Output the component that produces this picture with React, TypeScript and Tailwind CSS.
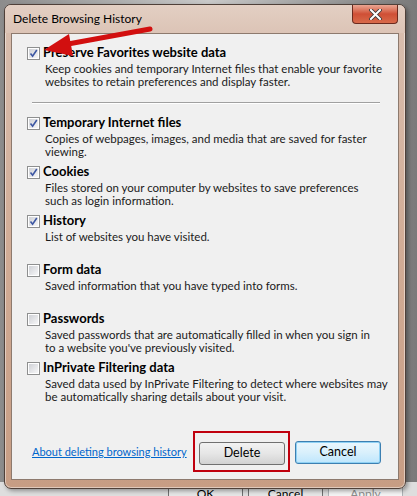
import React from "react";

type Entry = {
  label: string;
  lines: string[];
  checked: boolean;
};

const entries: Entry[] = [
  {
    label: "Temporary Internet files",
    lines: ["Copies of webpages, images, and media that are saved for faster", "viewing."],
    checked: true,
  },
  {
    label: "Cookies",
    lines: ["Files stored on your computer by websites to save preferences", "such as login information."],
    checked: true,
  },
  { label: "History", lines: ["List of websites you have visited."], checked: true },
  { label: "Form data", lines: ["Saved information that you have typed into forms."], checked: false },
  {
    label: "Passwords",
    lines: ["Saved passwords that are automatically filled in when you sign in", "to a website you've previously visited."],
    checked: false,
  },
  {
    label: "InPrivate Filtering data",
    lines: ["Saved data used by InPrivate Filtering to detect where websites may", "be automatically sharing details about your visit."],
    checked: false,
  },
];

// checkbox in the Win7 look
function Check({ checked }: { checked: boolean }) {
  return (
    <span className="flex h-[13px] w-[13px] shrink-0 border border-[#8e8f8f] bg-white p-px">
      <span className="relative flex h-full w-full bg-gradient-to-br from-[#cfd1d6] to-[#f7f7f8]">
        {checked && (
          <svg viewBox="0 0 9 9" className="absolute inset-0 h-[9px] w-[9px]">
            <path d="M1.5 4.5 L3.6 7.2 L7.8 1" fill="none" stroke="#3d57a3" strokeWidth="1.6" />
          </svg>
        )}
      </span>
    </span>
  );
}

function Item({ entry }: { entry: Entry }) {
  return (
    <div className="h-[49px]">
      <div className="flex h-[18px] items-center pl-[15px]">
        <Check checked={entry.checked} />
        <span className="ml-[3px] whitespace-nowrap text-[13px] font-bold text-black">{entry.label}</span>
      </div>
      <div className="whitespace-nowrap pl-[33px] text-[11.5px] leading-[13px] text-[#1a1a1a]">
        {entry.lines.map((l) => (
          <div key={l}>{l}</div>
        ))}
      </div>
    </div>
  );
}

export default function App() {
  return (
    <div className="relative h-[496px] w-[417px] overflow-hidden bg-gradient-to-r from-[#8c8c8c] via-[#c9c9c9] to-[#7a7a7a] font-['Lato',sans-serif]">
      {/* parent dialog peeking out underneath */}
      <div className="absolute inset-x-0 bottom-0 flex h-[14px] gap-[5px] bg-[#dedede] pl-[168px]">
        <div className="flex h-[23px] w-[75px] items-center justify-center rounded-[3px] border border-[#707070] bg-[#e6e6e6] text-[12px] text-black">OK</div>
        <div className="flex h-[23px] w-[75px] items-center justify-center rounded-[3px] border border-[#707070] bg-[#e6e6e6] text-[12px] text-black">Cancel</div>
        <div className="flex h-[23px] w-[75px] items-center justify-center rounded-[3px] border border-[#adb2b5] bg-[#f4f4f4] text-[12px] text-[#8d8d8d]">Apply</div>
      </div>

      {/* the dialog window */}
      <div className="absolute left-[4px] top-[4px] flex h-[485px] w-[402px] flex-col rounded-[7px] border border-[#4f4039] bg-gradient-to-b from-[#d9bfb0] via-[#d1ac96] to-[#c79d84] shadow-[inset_0_0_0_1px_rgba(255,255,255,0.45),2px_2px_4px_rgba(0,0,0,0.35)]">
        <div className="relative flex h-[28px] shrink-0 items-center rounded-t-[6px] bg-gradient-to-b from-[#e3cfc3] to-[#dcc4b6] pl-[8px] text-[12px] text-black">
          Delete Browsing History
          <div className="absolute right-[7px] top-0 flex h-[19px] w-[46px] items-center justify-center rounded-b-[4px] border border-t-0 border-[#6b2a1e] bg-gradient-to-b from-[#e9a592] via-[#cf4f35] to-[#d86a4a]">
            <svg viewBox="0 0 14 12" className="h-[11px] w-[13px]">
              <path d="M2 1 L12 11 M12 1 L2 11" stroke="#3a3a3a" strokeWidth="4" strokeLinecap="round" />
              <path d="M2 1 L12 11 M12 1 L2 11" stroke="#ffffff" strokeWidth="2.2" strokeLinecap="round" />
            </svg>
          </div>
        </div>

        <div className="mx-[6px] flex h-[447px] flex-col border border-[#8d7a6e] bg-[#f0f0f0] pt-[10px]">
          <div className="h-[44px]">
            <div className="flex h-[18px] items-center pl-[15px]">
              <Check checked />
              <span className="ml-[3px] whitespace-nowrap text-[13px] font-bold text-black">Preserve Favorites website data</span>
            </div>
            <div className="whitespace-nowrap pl-[33px] text-[11.5px] leading-[13px] text-[#1a1a1a]">
              <div>Keep cookies and temporary Internet files that enable your favorite</div>
              <div>websites to retain preferences and display faster.</div>
            </div>
          </div>

          <div className="mb-[11px] ml-[20px] mt-[14px] h-px w-[348px] bg-[#a0a0a0] shadow-[0_1px_0_#ffffff]" />

          {entries.map((e) => (
            <Item key={e.label} entry={e} />
          ))}

          <div className="mt-auto flex items-center pb-[14px] pr-[17px]">
            <a className="ml-[20px] whitespace-nowrap text-[11px] text-[#0066cc] underline">About deleting browsing history</a>
            <div className="relative ml-auto">
              <button className="h-[23px] w-[86px] rounded-[3px] border border-[#707070] bg-gradient-to-b from-[#f2f2f2] via-[#e6e6e6] to-[#d2d2d2] text-[12.5px] text-black">
                Delete
              </button>
              <span className="pointer-events-none absolute -bottom-[7px] -left-[6px] -right-[5px] -top-[8px] border-2 border-[#c0000e]" />
            </div>
            <button className="ml-[10px] h-[23px] w-[86px] rounded-[3px] border border-[#3c7fb1] bg-gradient-to-b from-[#eaf6fd] via-[#d9f0fc] to-[#bee6fd] text-[12.5px] text-black shadow-[inset_0_0_0_1px_#8fd1f4]">
              Cancel
            </button>
          </div>
        </div>
      </div>

      {/* red annotation arrow */}
      <svg className="pointer-events-none absolute left-0 top-0" width="417" height="496">
        <line x1="150" y1="29" x2="68" y2="44" stroke="#d20f0f" strokeWidth="5" strokeLinecap="round" />
        <polygon points="44,50 69,34 73,56" fill="#d20f0f" />
      </svg>
    </div>
  );
}
